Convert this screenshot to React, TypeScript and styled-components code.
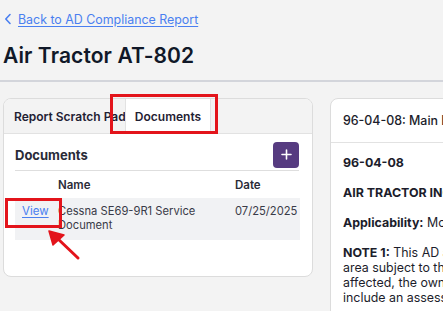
import React from "react";
import styled, { createGlobalStyle } from "styled-components";

const Global = createGlobalStyle`
  html, body { margin: 0; padding: 0; background: #f3f3f3; overflow: hidden; }
  body { font-family: Inter, "Noto Sans", sans-serif; color: #1c1d2b; }
  * { box-sizing: border-box; }
`;

const Page = styled.div`
  position: relative;
  width: 900px;
  padding: 10px 0 0 3px;
`;

const BackLink = styled.a`
  display: flex;
  align-items: center;
  gap: 6px;
  height: 18px;
  padding-left: 1px;
  color: #4a7ff0;
  font-size: 12.4px;
  text-decoration: underline;
  text-underline-offset: 2px;
  cursor: pointer;
`;

const Title = styled.h1`
  margin: 13px 0 0;
  font-size: 21px;
  font-weight: 600;
  line-height: 30px;
  color: #101828;
  letter-spacing: 0.1px;
`;

const Divider = styled.hr`
  margin: 9px 0 0 -3px;
  border: none;
  border-top: 2px solid #d3d5db;
`;

const Columns = styled.div`
  display: grid;
  grid-template-columns: 310px 640px;
  gap: 17px;
  margin-top: 16px;
  align-items: start;
`;

const Card = styled.div`
  background: #fff;
  border: 1px solid #dcdcdc;
  border-radius: 8px;
  overflow: hidden;
`;

const TabBar = styled.div`
  display: flex;
  height: 35px;
  background: #f3f3f3;
  border-bottom: 1px solid #e2e2e2;
`;

const Tab = styled.div<{ $active?: boolean; $width: number }>`
  display: flex;
  align-items: center;
  justify-content: ${(p) => (p.$active ? "center" : "flex-start")};
  width: ${(p) => p.$width}px;
  padding: 0 10px;
  white-space: nowrap;
  overflow: hidden;
  font-size: 12px;
  font-weight: 600;
  color: #1f2133;
  background: ${(p) => (p.$active ? "#fff" : "transparent")};
  border-left: ${(p) => (p.$active ? "1px solid #e2e2e2" : "none")};
  border-right: ${(p) => (p.$active ? "1px solid #e2e2e2" : "none")};
  margin-bottom: ${(p) => (p.$active ? "-1px" : "0")};
`;

const CardBody = styled.div`
  padding: 8px 13px 36px 11px;
`;

const SectionHead = styled.div`
  display: flex;
  align-items: center;
  justify-content: space-between;
  height: 29px;
  border-bottom: 1px solid #dedede;
  padding-bottom: 3px;
`;

const SectionTitle = styled.h2`
  margin: 0;
  font-size: 13px;
  font-weight: 700;
  color: #2a2b38;
`;

const AddButton = styled.button`
  width: 26px;
  height: 26px;
  border: none;
  border-radius: 4px;
  background: #563b80;
  color: #fff;
  display: flex;
  align-items: center;
  justify-content: center;
  padding: 0;
`;

const Table = styled.div`
  display: grid;
  grid-template-columns: 36px 177px 72px;
`;

const HeadCell = styled.div`
  height: 27px;
  display: flex;
  align-items: center;
  padding: 0 7px;
  font-size: 11.5px;
  font-weight: 600;
  color: #2a2b38;
`;

const Cell = styled.div`
  background: #f1f2f4;
  padding: 6px 7px 8px;
  font-size: 11.2px;
  line-height: 14px;
  color: #3a3b48;
`;

const ViewLink = styled.a`
  color: #4a7ff0;
  text-decoration: underline;
  text-underline-offset: 2px;
  font-size: 11.5px;
`;

const HeaderBar = styled.div`
  height: 44px;
  display: flex;
  align-items: center;
  padding: 0 12px;
  border-bottom: 1px solid #e2e2e2;
  font-size: 12.4px;
  font-weight: 500;
  color: #1c1d2b;
  white-space: nowrap;
`;

const DocBody = styled.div`
  padding: 12px 12px 20px;
  font-size: 12.4px;
  line-height: 15px;
  color: #1c1d2b;
`;

const Para = styled.p`
  margin: 0 0 15px;
  white-space: nowrap;
`;

const Line = styled.span`
  display: block;
`;

const Highlight = styled.div<{ $x: number; $y: number; $w: number; $h: number }>`
  position: absolute;
  left: ${(p) => p.$x}px;
  top: ${(p) => p.$y}px;
  width: ${(p) => p.$w}px;
  height: ${(p) => p.$h}px;
  border: 3px solid #e3141b;
  pointer-events: none;
`;

const Arrow = styled.svg`
  position: absolute;
  left: 40px;
  top: 222px;
  pointer-events: none;
`;

export default function App() {
  return (
    <Page>
      <Global />
      <BackLink>
        <svg width="8" height="12" viewBox="0 0 8 12" fill="none">
          <path d="M6 1.5 1.8 6 6 10.5" stroke="#4a7ff0" strokeWidth="1.6" strokeLinecap="round" strokeLinejoin="round" />
        </svg>
        Back to AD Compliance Report
      </BackLink>
      <Title>Air Tractor AT-802</Title>
      <Divider />
      <Columns>
        <Card>
          <TabBar>
            <Tab $width={121}>Report Scratch Pad</Tab>
            <Tab $active $width={86}>Documents</Tab>
          </TabBar>
          <CardBody>
            <SectionHead>
              <SectionTitle>Documents</SectionTitle>
              <AddButton aria-label="Add document">
                <svg width="11" height="11" viewBox="0 0 11 11">
                  <path d="M5.5 1v9M1 5.5h9" stroke="#fff" strokeWidth="1.6" strokeLinecap="round" />
                </svg>
              </AddButton>
            </SectionHead>
            <Table>
              <HeadCell />
              <HeadCell>Name</HeadCell>
              <HeadCell>Date</HeadCell>
              <Cell><ViewLink>View</ViewLink></Cell>
              <Cell>Cessna SE69-9R1 Service Document</Cell>
              <Cell>07/25/2025</Cell>
            </Table>
          </CardBody>
        </Card>
        <Card>
          <HeaderBar>96-04-08: Main Landing Gear Attach Fittings</HeaderBar>
          <DocBody>
            <Para><strong>96-04-08</strong></Para>
            <Para><strong>AIR TRACTOR INC.: Amendment 39-9517; Docket No. 95-CE-66-AD.</strong></Para>
            <Para><strong>Applicability:</strong> Models AT-802 and AT-802A airplanes (serial numbers 802-0001 through 802-0026), certificated in any category.</Para>
            <Para>
              <Line><strong>NOTE 1:</strong> This AD applies to each airplane identified in the preceding applicability provision, regardless of whether it has been modified, altered, or repaired in the</Line>
              <Line>area subject to the requirements of this AD. For airplanes that have been modified, altered, or repaired so that the performance of the requirements of this AD is</Line>
              <Line>affected, the owner/operator must request approval for an alternative method of compliance in accordance with paragraph (c) of this AD. The request should</Line>
              <Line>include an assessment of the effect of the modification, alteration, or repair on the unsafe condition addressed by this AD.</Line>
            </Para>
          </DocBody>
        </Card>
      </Columns>
      <Highlight $x={110} $y={94} $w={108} $h={40} />
      <Highlight $x={5} $y={198} $w={57} $h={30} />
      <Arrow width="44" height="42" viewBox="0 0 44 42">
        <path d="M38 36 L17 16" stroke="#e3141b" strokeWidth="3" strokeLinecap="round" />
        <path d="M9 9 L24 13 L13 23 Z" fill="#e3141b" stroke="#e3141b" strokeWidth="1.5" strokeLinejoin="round" />
      </Arrow>
    </Page>
  );
}
